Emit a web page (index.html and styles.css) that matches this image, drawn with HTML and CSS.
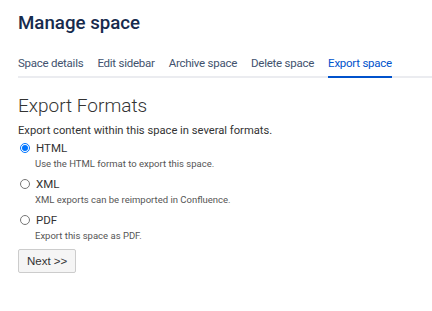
FILE: index.html
```html
<!DOCTYPE html>
<html lang="en">
<head>
    <meta charset="UTF-8">
    <title>Manage space</title>
    <link rel="stylesheet" href="styles.css">
</head>
<body>
    <div class="page">
        <h1 class="page-title">Manage space</h1>
        <nav class="tabs">
            <a href="#">Space details</a>
            <a href="#">Edit sidebar</a>
            <a href="#">Archive space</a>
            <a href="#">Delete space</a>
            <a href="#" class="active">Export space</a>
        </nav>
        <div class="content">
            <h2>Export Formats</h2>
            <p class="intro">Export content within this space in several formats.</p>
            <div class="option">
                <label><input type="radio" name="format" checked> HTML</label>
                <div class="desc">Use the HTML format to export this space.</div>
            </div>
            <div class="option">
                <label><input type="radio" name="format"> XML</label>
                <div class="desc">XML exports can be reimported in Confluence.</div>
            </div>
            <div class="option">
                <label><input type="radio" name="format"> PDF</label>
                <div class="desc">Export this space as PDF.</div>
            </div>
            <button class="next-button">Next &gt;&gt;</button>
        </div>
    </div>
</body>
</html>
```

FILE: styles.css
```css
body {
    margin: 0;
    font-family: Roboto, "Noto Sans", Arial, sans-serif;
    color: #333;
    background-color: #fff;
}
.page {
    padding: 10px 0 0 18px;
}
.page-title {
    margin: 0;
    font-size: 18.7px;
    font-weight: 500;
    color: #172b4d;
    line-height: 26px;
}
.tabs {
    display: flex;
    gap: 14px;
    margin-top: 18px;
    border-bottom: 2px solid #ebecf0;
}
.tabs a {
    flex-shrink: 0;
    white-space: nowrap;
    color: #42526e;
    text-decoration: none;
    font-size: 11.5px;
    letter-spacing: -0.25px;
    line-height: 18px;
    padding-bottom: 4px;
    margin-bottom: -2px;
    border-bottom: 2px solid transparent;
}
.tabs a.active {
    color: #0052cc;
    border-bottom-color: #0052cc;
}
.content {
    padding-top: 16px;
}
.content h2 {
    margin: 0;
    font-size: 19px;
    font-weight: 300;
    line-height: 24px;
    color: #333;
}
.intro {
    margin: 5px 0 2px;
    font-size: 11.2px;
    line-height: 16px;
}
.option label {
    display: flex;
    align-items: center;
    font-size: 11.5px;
    line-height: 14px;
}
.option input {
    margin: 0 6px 0 2px;
    width: 10px;
    height: 10px;
}
.desc {
    margin: 2px 0 7px 17px;
    font-size: 9.5px;
    color: #555;
    line-height: 13px;
}
.next-button {
    display: block;
    margin-top: 2px;
    font-family: "Liberation Sans", Arial, sans-serif;
    font-size: 11.5px;
    line-height: 14px;
    color: #333;
    background-color: #f5f5f5;
    border: 1px solid #ccc;
    border-radius: 2px;
    padding: 4px 8px;
}
```
